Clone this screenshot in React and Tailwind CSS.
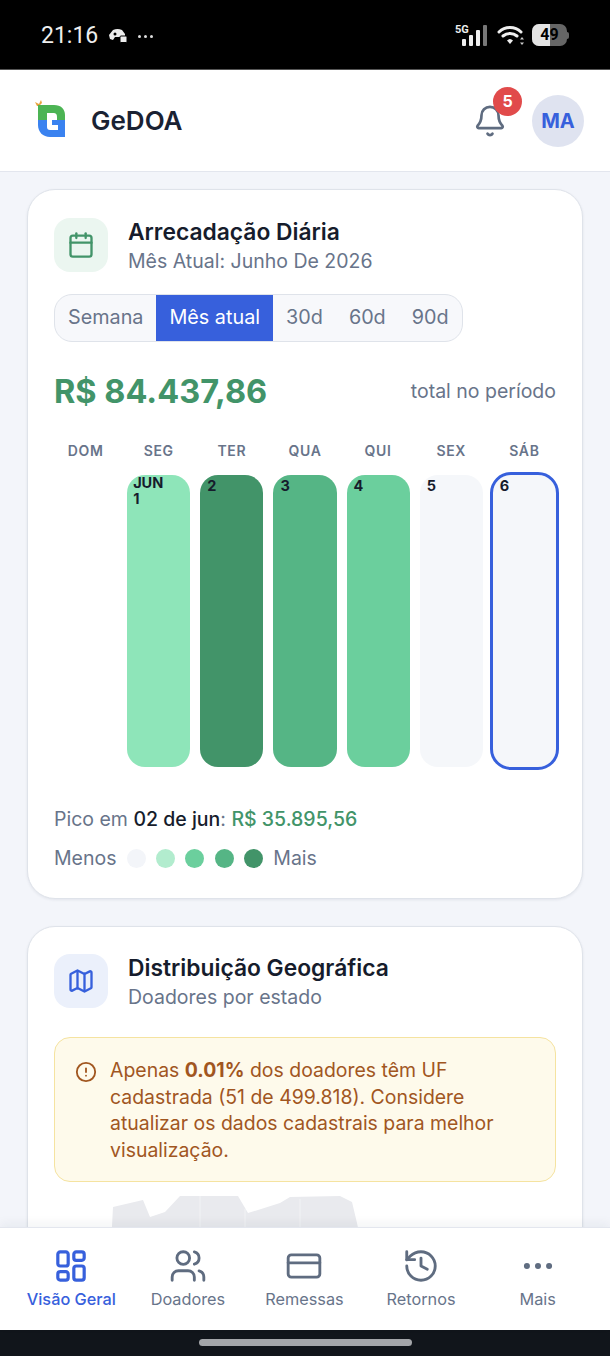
import React from 'react';
import { Bell, Calendar, Map, CircleAlert, Users, CreditCard, History, Ellipsis } from 'lucide-react';

const days = ['DOM', 'SEG', 'TER', 'QUA', 'QUI', 'SEX', 'SÁB'];
const tabs = ['Semana', 'Mês atual', '30d', '60d', '90d'];
const legend = ['bg-[#f3f5f9]', 'bg-[#b2ecce]', 'bg-[#6bcf9d]', 'bg-[#55b585]', 'bg-[#429469]'];

const bars = [
  { day: '1', month: 'JUN', color: 'bg-[#8ee5b9]' },
  { day: '2', color: 'bg-[#429469]' },
  { day: '3', color: 'bg-[#55b585]' },
  { day: '4', color: 'bg-[#6bcf9d]' },
  { day: '5', color: 'bg-[#f5f7fa]' },
  { day: '6', color: 'bg-[#f5f7fa]', today: true },
];

const navItems = [
  { label: 'Visão Geral', active: true },
  { label: 'Doadores', icon: Users },
  { label: 'Remessas', icon: CreditCard },
  { label: 'Retornos', icon: History },
  { label: 'Mais', icon: Ellipsis },
];

function StatusBar() {
  return (
    <div className="flex h-[70px] shrink-0 items-start justify-between border-b border-[#555] bg-black px-[41px] pt-[23px]">
      <div className="flex items-center gap-[10px] text-[#eee]">
        <span className="text-[23px] leading-[26px] [font-family:Roboto,sans-serif]">21:16</span>
        <svg width="20" height="16" viewBox="0 0 20 16">
          <path d="M5 2c3-1.500 6-1.500 9 0l3 4v3H7l-2 3-3-1-1-4z" fill="#eee" />
          <circle cx="7" cy="6" r="1.500" fill="#000" />
          <rect x="12" y="8" width="7" height="6.500" rx="1" fill="#eee" stroke="#000" />
        </svg>
        <div className="flex gap-[3px]">
          <span className="h-[3px] w-[3px] rounded-full bg-[#ddd]" />
          <span className="h-[3px] w-[3px] rounded-full bg-[#ddd]" />
          <span className="h-[3px] w-[3px] rounded-full bg-[#ddd]" />
        </div>
      </div>
      <div className="flex items-center gap-[7px] pt-[1px]">
        <svg width="35" height="22" viewBox="0 0 35 22">
          <text x="0" y="9" fontSize="11" fontWeight="700" fill="#eee" fontFamily="Roboto, sans-serif">5G</text>
          <rect x="7" y="15" width="4" height="7" rx="1" fill="#eee" />
          <rect x="14" y="11" width="4" height="11" rx="1" fill="#eee" />
          <rect x="21" y="6" width="4" height="16" rx="1" fill="#eee" />
          <rect x="28" y="1" width="4" height="21" rx="1" fill="#777" />
        </svg>
        <svg width="28" height="22" viewBox="0 0 28 22" fill="none">
          <path d="M2 8c6-6 16-6 22 0M6 12c4-3.500 10-3.500 14 0" stroke="#eee" strokeWidth="3" strokeLinecap="round" />
          <path d="M10 16.500c2-2 4-2 6 0l-3 3.500z" fill="#eee" />
          <path d="M25 13l2 2.500h-4zM25 21l2-2.500h-4z" fill="#ccc" />
        </svg>
        <div className="flex items-center">
          <div className="relative flex h-[22px] w-[35px] items-center justify-center overflow-hidden rounded-[7px] bg-[#666]">
            <div className="absolute inset-y-0 left-0 w-[18px] bg-[#e4e4e4]" />
            <span className="relative text-[16px] font-bold leading-none text-black [font-family:Roboto,sans-serif]">49</span>
          </div>
          <div className="h-[7px] w-[2px] rounded-r-sm bg-[#666]" />
        </div>
      </div>
    </div>
  );
}

function Logo() {
  return (
    <svg className="-mt-[3px]" width="36" height="40" viewBox="0 0 36 40">
      <path d="M5 3l4 2 2-4 1 3-3 3-2 0z" fill="#e8a33d" />
      <path d="M8 6h16c7 0 11 4 11 10v5h-8v-3c0-3-1-4-4-4h-6v7H8z" fill="#4cb454" />
      <path d="M8 21h9v7c0 2 1 3 3 3h8v-5h-6v-5h13v17H20c-7 0-12-5-12-12z" fill="#3a82f0" />
    </svg>
  );
}

function Header() {
  return (
    <header className="flex h-[102px] shrink-0 items-center justify-between border-b border-[#e3e6ee] bg-white pl-[30px] pr-[26px]">
      <div className="flex items-center gap-[25px]">
        <Logo />
        <span className="text-[26px] font-semibold text-[#1a2233]">GeDOA</span>
      </div>
      <div className="flex items-center gap-[25px]">
        <div className="relative">
          <Bell className="h-[34px] w-[34px] text-[#5f6c80]" strokeWidth={1.9} />
          <span className="absolute -right-[15px] -top-[17px] flex h-[29px] w-[29px] items-center justify-center rounded-full bg-[#e14b4b] text-[16px] font-bold text-white">5</span>
        </div>
        <div className="flex h-[52px] w-[52px] items-center justify-center rounded-full bg-[#dfe3f0] text-[20px] font-bold text-[#3760dc]">MA</div>
      </div>
    </header>
  );
}

function CardTitle({ icon: Icon, iconClass, boxClass, title, subtitle }) {
  return (
    <div className="flex items-start gap-[20px]">
      <div className={`flex h-[54px] w-[54px] items-center justify-center rounded-[16px] ${boxClass}`}>
        <Icon className={`h-[28px] w-[28px] ${iconClass}`} strokeWidth={2} />
      </div>
      <div>
        <h2 className="text-[22.8px] font-semibold leading-[28px] text-[#161c2c]">{title}</h2>
        <p className="text-[19.5px] leading-[30px] text-[#68748a]">{subtitle}</p>
      </div>
    </div>
  );
}

function Arrecadacao() {
  return (
    <section className="rounded-[28px] border border-[#dfe3ea] bg-white px-[26px] pb-[26px] pt-[28px] shadow-[0_1px_3px_rgba(30,40,70,0.08)]">
      <CardTitle
        icon={Calendar}
        iconClass="text-[#429469]"
        boxClass="bg-[#ebf6f0]"
        title="Arrecadação Diária"
        subtitle="Mês Atual: Junho De 2026"
      />
      <div className="mt-[18px] flex h-[48px] w-[409px] overflow-hidden rounded-[18px] border border-[#dfe3ea] bg-[#f7f8fb]">
        {tabs.map((tab) => (
          <div
            key={tab}
            className={`flex items-center justify-center whitespace-nowrap px-[13px] text-[19.8px] ${tab === 'Mês atual' ? 'bg-[#3760dc] text-white' : 'text-[#68748a]'}`}
          >
            {tab}
          </div>
        ))}
      </div>
      <div className="mt-[29px] flex items-center justify-between">
        <span className="text-[32.5px] font-bold leading-[42px] text-[#429469]">R$ 84.437,86</span>
        <span className="text-[19.5px] text-[#68748a]">total no período</span>
      </div>
      <div className="mt-[27px] grid grid-cols-7 gap-x-[10px]">
        {days.map((day) => (
          <div key={day} className="text-center text-[14px] font-semibold leading-[22px] tracking-[0.7px] text-[#68748a]">{day}</div>
        ))}
      </div>
      <div className="mt-[13px] grid h-[292px] grid-cols-7 gap-x-[10px]">
        <div />
        {bars.map((bar) => (
          <div
            key={bar.day}
            className={`rounded-[18px] text-[14.5px] font-bold leading-[16px] text-[#161c2c] ${bar.month ? 'pl-[6px]' : 'pl-[7px] pt-[3px]'} ${bar.color} ${bar.today ? 'outline-[3px] outline-[#3760dc]' : ''}`}
          >
            {bar.month ? <div>{bar.month}</div> : null}
            <div>{bar.day}</div>
          </div>
        ))}
      </div>
      <p className="mt-[38px] text-[19.5px] leading-[28px] text-[#68748a]">
        Pico em <span className="font-medium text-[#161c2c]">02 de jun</span>: <span className="font-medium text-[#429469]">R$ 35.895,56</span>
      </p>
      <div className="mt-[11px] flex items-center gap-[10.3px] text-[19.5px] leading-[28px] text-[#68748a]">
        <span>Menos</span>
        {legend.map((color) => (
          <span key={color} className={`h-[19px] w-[19px] rounded-full ${color}`} />
        ))}
        <span>Mais</span>
      </div>
    </section>
  );
}

function Distribuicao() {
  return (
    <section className="mt-[27px] rounded-[28px] border border-[#dfe3ea] bg-white px-[26px] pt-[27px] shadow-[0_1px_3px_rgba(30,40,70,0.08)]">
      <CardTitle
        icon={Map}
        iconClass="text-[#3760dc]"
        boxClass="bg-[#ebf0fb]"
        title="Distribuição Geográfica"
        subtitle="Doadores por estado"
      />
      <div className="mt-[25px] flex gap-[13px] rounded-[16px] border border-[#f5e3a0] bg-[#fefaeb] pb-[18px] pl-[20px] pr-[18px] pt-[19px]">
        <CircleAlert className="mt-[4px] h-[22px] w-[22px] shrink-0 text-[#a1561f]" strokeWidth={2} />
        <p className="text-[19.45px] leading-[26.5px] text-[#a1561f]">
          Apenas <strong className="font-bold">0.01%</strong> dos doadores têm UF cadastrada (51 de 499.818). Considere atualizar os dados cadastrais para melhor visualização.
        </p>
      </div>
      <svg className="ml-[56px] mt-[13px] block" width="260" height="70" viewBox="0 0 260 70">
        <path
          d="M3 12L33 5L40 22L55 17L70 1L128 1L138 18L170 8L180 2L230 1L242 7L247 28L256 70L0 70Z"
          fill="#e9eaee"
        />
        <path d="M90 1V40M135 14V40M190 4V40" stroke="#f2f3f5" fill="none" />
      </svg>
    </section>
  );
}

function OverviewIcon() {
  return (
    <svg width="32" height="32" viewBox="0 0 34 34" fill="none" stroke="#3760dc" strokeWidth="3.4">
      <rect x="3" y="2" width="11" height="15" rx="2.5" />
      <rect x="20" y="2" width="11" height="9" rx="2.5" />
      <rect x="3" y="23" width="11" height="9" rx="2.5" />
      <rect x="20" y="17" width="11" height="15" rx="2.5" />
    </svg>
  );
}

function BottomNav() {
  return (
    <nav className="relative grid h-[103px] shrink-0 grid-cols-5 border-t border-[#e3e6ee] bg-white pl-[13px] pr-[14px] pt-[19px] shadow-[0_-4px_10px_rgba(20,30,60,0.05)]">
      {navItems.map(({ label, icon: Icon, active }) => (
        <div key={label} className="flex flex-col items-center">
          <div className="flex h-[38px] items-center justify-center">
            {active ? <OverviewIcon /> : <Icon className="h-[38px] w-[38px] text-[#5f6c80]" strokeWidth={1.8} />}
          </div>
          <span className={`mt-[2px] whitespace-nowrap text-[16.3px] leading-[24px] ${active ? 'font-medium text-[#3760dc]' : 'text-[#68748a]'}`}>{label}</span>
        </div>
      ))}
    </nav>
  );
}

export default function App() {
  return (
    <div className="flex h-[1356px] w-[610px] flex-col overflow-hidden bg-[#f3f5fa] [font-family:Inter,sans-serif]">
      <StatusBar />
      <Header />
      <main className="min-h-0 flex-1 overflow-hidden px-[27px] pt-[17px]">
        <Arrecadacao />
        <Distribuicao />
      </main>
      <BottomNav />
      <div className="flex h-[26px] shrink-0 items-start justify-center bg-[#11151b] pt-[9px]">
        <div className="h-[7px] w-[213px] rounded-full bg-[#a3a5a9]" />
      </div>
    </div>
  );
}
